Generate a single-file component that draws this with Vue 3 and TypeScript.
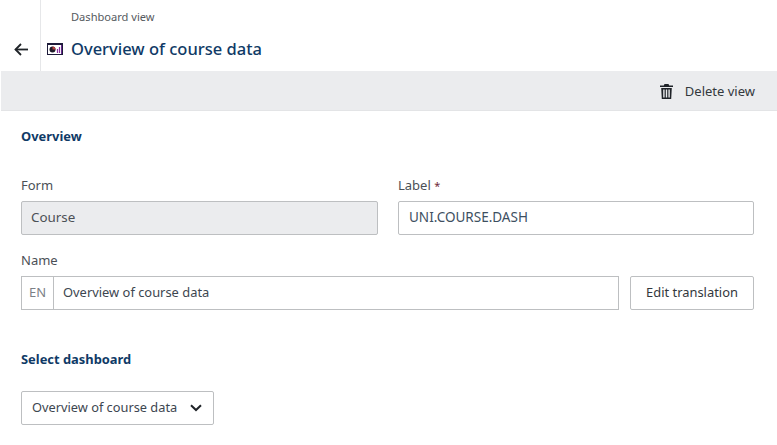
<script setup lang="ts">
const title: string = 'Overview of course data'
</script>

<template>
  <div class="page">
    <header class="header">
      <button class="back" aria-label="Back">
        <svg width="14" height="13" viewBox="0 0 14 13" fill="none" stroke="#1f2328" stroke-width="1.800">
          <path d="M14 6.500H1.500" />
          <path d="M7 1 1.500 6.500 7 12" />
        </svg>
      </button>
      <div class="heading">
        <div class="crumb">Dashboard view</div>
        <div class="title-row">
          <svg class="dash-icon" width="16" height="12" viewBox="0 0 16 12">
            <rect x="0.5" y="0.5" width="15" height="11" fill="#fff" stroke="#1d1b3a" />
            <rect x="1" y="1" width="14" height="1" fill="#1d1b3a" />
            <circle cx="5.500" cy="6.500" r="3" fill="#1f1c2a" />
            <path d="M5.500 6.500V3.500A3 3 0 0 1 8.500 6.500z" fill="#b23c3c" />
            <path d="M10.500 6v4M12.500 4v6" stroke="#8a2fa0" stroke-width="1.200" />
            <path d="M14.500 2v9" stroke="#6a2a90" stroke-width="1" />
          </svg>
          <h1 class="title">{{ title }}</h1>
        </div>
      </div>
    </header>

    <div class="toolbar">
      <button class="tool">
        <svg width="13" height="15" viewBox="0 0 13 15" fill="#1f2328">
          <path d="M4.500 0h4l.7 1.500H13V3H0V1.500h3.800z" />
          <path d="M1.200 4h10.600l-.6 11H1.800zM3.200 5.500v8h1.400v-8zM5.800 5.500v8h1.400v-8zM8.400 5.500v8h1.400v-8z" fill-rule="evenodd" />
        </svg>
        <span>Delete view</span>
      </button>
    </div>

    <main class="content">
      <h2 class="section first">Overview</h2>

      <div class="grid">
        <div class="field">
          <label>Form</label>
          <div class="input disabled"><span class="caps">Course</span></div>
        </div>
        <div class="field">
          <label>Label <span class="req">*</span></label>
          <div class="input"><span class="caps upper">UNI.COURSE.DASH</span></div>
        </div>
      </div>

      <div class="field name-field">
        <label>Name</label>
        <div class="name-row">
          <div class="input group">
            <span class="lang">EN</span>
            <span class="name-value">{{ title }}</span>
          </div>
          <button class="btn">Edit translation</button>
        </div>
      </div>

      <h2 class="section second">Select dashboard</h2>

      <div class="select">
        <span>{{ title }}</span>
        <svg width="12" height="8" viewBox="0 0 12 8" fill="none" stroke="#1f2328" stroke-width="2">
          <path d="M1 1.200 6 6l5-4.800" />
        </svg>
      </div>
    </main>
  </div>
</template>

<style>
html, body { margin: 0; background: #fff; }
</style>

<style scoped>
.page {
  width: 777px;
  height: 445px;
  overflow: hidden;
  font-family: "Noto Sans", sans-serif;
  font-size: 12.900px;
  color: #33383d;
  background: #fff;
}
.header { display: flex; height: 71px; }
.back {
  width: 41px;
  box-sizing: border-box;
  border: 0;
  border-right: 1px solid #e6e7e9;
  background: none;
  padding: 43px 0 0 2px;
  display: flex;
  justify-content: center;
  align-items: flex-start;
}
.heading { padding-left: 6px; }
.crumb { margin: 9px 0 0 24px; font-size: 11.100px; line-height: 15px; color: #555a60; }
.title-row { display: flex; align-items: center; gap: 8px; margin-top: 12px; }
.title { margin: 0; font-size: 16.500px; line-height: 26px; font-weight: 500; color: #0f3a66; }
.toolbar {
  height: 39px;
  margin-left: 1px;
  background: #ebecee;
  border-bottom: 1px solid #e3e4e6;
  display: flex;
  justify-content: flex-end;
  align-items: center;
  padding-right: 22px;
}
.tool {
  display: flex;
  align-items: center;
  gap: 12px;
  border: 0;
  background: none;
  padding: 1px 0 0;
  font: inherit;
  font-size: 13px;
  color: #33383d;
}
.content { padding: 0 23px 0 21px; }
.section { margin: 0; font-size: 12.900px; line-height: 18px; font-weight: 700; color: #0f3a66; }
.section.first { margin-top: 16px; }
.section.second { margin-top: 40px; }
.grid { display: grid; grid-template-columns: 357px 356px; column-gap: 20px; margin-top: 31px; }
.field label { display: block; height: 18px; line-height: 18px; margin-bottom: 7px; font-size: 13px; color: #4b5056; }
.req { color: #6e2a3a; font-size: 11px; line-height: 1; }
.input {
  box-sizing: border-box;
  height: 34px;
  border: 1px solid #bdbfc1;
  border-radius: 2px;
  padding: 0 9px 2px;
  display: flex;
  align-items: center;
  background: #fff;
  font-size: 12.900px;
  color: #3d4f5f;
}
.caps { font-size: 13.400px; }
.upper { font-size: 13.500px; margin-left: 1px; }
.input.disabled { background: #ebecee; color: #4b5056; }
.name-field { margin-top: 16px; }
.name-row { display: flex; gap: 11px; }
.group { flex: 1; padding: 0; border-radius: 0; align-items: stretch; }
.lang {
  width: 32px;
  box-sizing: border-box;
  border-right: 1px solid #bdbfc1;
  padding-bottom: 2px;
  display: flex;
  align-items: center;
  justify-content: center;
  font-size: 13px;
  color: #7c8187;
}
.name-value { display: flex; align-items: center; padding: 0 0 2px 9px; color: #3d4650; }
.btn {
  box-sizing: border-box;
  width: 124px;
  height: 34px;
  border: 1px solid #bdbfc1;
  border-radius: 2px;
  background: #fff;
  padding: 0 0 3px;
  font: inherit;
  color: #33383d;
}
.select {
  box-sizing: border-box;
  width: 193px;
  height: 34px;
  margin-top: 23px;
  border: 1px solid #bdbfc1;
  border-radius: 2px;
  padding: 0 11px 3px 10px;
  display: flex;
  align-items: center;
  justify-content: space-between;
  font-size: 12.800px;
  color: #3d4650;
}
.select svg { margin-top: 3px; }
</style>
